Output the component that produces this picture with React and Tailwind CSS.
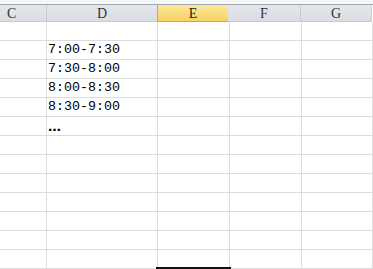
import React from "react";

const cols = [
  { w: "w-[47px]", label: "C", align: "justify-start pl-[7px]" },
  { w: "w-[111px]", label: "D", align: "justify-center" },
  { w: "w-[72px]", label: "E", align: "justify-center", sel: true },
  { w: "w-[72px]", label: "F", align: "justify-center" },
  { w: "w-[71px]", label: "G", align: "justify-center" },
];

const dData = ["", "7:00-7:30", "7:30-8:00", "8:00-8:30", "8:30-9:00", "…", "", "", "", "", "", "", ""];

export default function App() {
  return (
    <div
      className="relative w-[373px] h-[269px] overflow-hidden bg-white"
      style={{ fontFamily: '"Liberation Mono", "DejaVu Sans Mono", monospace' }}
    >
      <div className="h-[4px] bg-[#f4f6f8]" />
      <div className="h-[1px] bg-[#9ea8b4]" />
      <div className="flex h-[17px]" style={{ fontFamily: '"Liberation Serif", serif' }}>
        {cols.map((c, i) =>
          c.sel ? (
            <div
              key={i}
              className={`${c.w} shrink-0 flex items-center ${c.align} text-[14px] text-[#222] bg-gradient-to-b from-[#fde898] to-[#f8d264] border-b border-r border-l border-[#e0a244] -ml-[1px]`}
            >
              {c.label}
            </div>
          ) : (
            <div
              key={i}
              className={`${c.w} shrink-0 flex items-center ${c.align} text-[14px] text-[#333] bg-gradient-to-b from-[#e4e8ed] to-[#dadee4] border-b border-r border-[#c7ccd3] ${i === 3 ? "-ml-[1px] w-[73px]" : ""}`}
            >
              {c.label}
            </div>
          )
        )}
      </div>
      {dData.map((d, r) => (
        <div key={r} className="flex h-[19px]">
          {cols.map((c, i) => (
            <div
              key={i}
              className={`${c.w} shrink-0 border-b border-r border-[#dadcdd] flex items-center pl-[1px] text-[13.33px] text-black leading-none`}
            >
              {i === 1 ? (
                d === "…" ? (
                  <span
                    className="text-[13px] font-bold"
                    style={{ fontFamily: '"DejaVu Sans", sans-serif' }}
                  >
                    …
                  </span>
                ) : (
                  d
                )
              ) : (
                ""
              )}
            </div>
          ))}
        </div>
      ))}
      <div className="absolute left-[156px] top-[267px] w-[75px] h-[2px] bg-[#111]" />
    </div>
  );
}
